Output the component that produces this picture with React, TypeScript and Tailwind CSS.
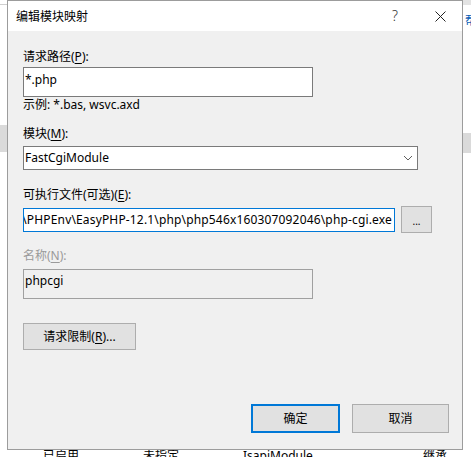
import React from "react";

const U = ({ c }: { c: string }) => <span className="underline underline-offset-2">{c}</span>;

function Btn({ children, className = "" }: { children: React.ReactNode; className?: string }) {
  return (
    <div className={"flex items-center justify-center bg-[#e1e1e1] border border-[#adadad] text-black " + className}>
      {children}
    </div>
  );
}

export default function App() {
  return (
    <div
      className="w-[471px] h-[457px] bg-white overflow-hidden flex flex-col text-[12px] leading-4 text-black"
      style={{ fontFamily: '"Noto Sans", "Noto Sans CJK SC", sans-serif' }}
    >
      <div className="flex h-[450px] shrink-0">
        {/* left background strip */}
        <div className="w-[7px] shrink-0 flex flex-col">
          <div className="h-[4px]" />
          <div className="h-px bg-[#cfcfcf]" />
          <div className="h-[120px]" />
          <div className="h-[27px] bg-[#dadada]" />
        </div>

        {/* dialog */}
        <div className="w-[456px] shrink-0 h-[450px] border border-[#9c9c9c] flex flex-col bg-[#f0f0f0]">
          <div className="h-[30px] shrink-0 bg-white flex items-center pl-[8px] pr-[16px]">
            <span className="flex-1 pt-px">编辑模块映射</span>
            <span className="text-[14px] text-[#333] mr-[37px] font-light">?</span>
            <svg width="11" height="11" viewBox="0 0 11 11" className="mt-px">
              <path d="M0.5 0.5 L10.5 10.5 M10.5 0.5 L0.5 10.5" stroke="#222" strokeWidth="1" fill="none" />
            </svg>
          </div>

          <div className="flex-1 flex flex-col pl-[15px] pr-[13px] pt-[18px] pb-[16px]">
            <div>
              请求路径(<U c="P" />):
            </div>
            <div className="mt-[2px] w-[290px] h-[30px] bg-white border border-[#7a7a7a] pl-[1px] pt-[4px]">*.php</div>
            <div className="mt-0">示例: *.bas, wsvc.axd</div>

            <div className="mt-[13px]">
              模块(<U c="M" />):
            </div>
            <div className="mt-[4px] w-[395px] h-[24px] bg-white border border-[#7a7a7a] pl-[1px] pr-[4px] flex items-center">
              <span className="flex-1">FastCgiModule</span>
              <svg width="10" height="6" viewBox="0 0 10 6">
                <path d="M1 1 L5 5 L9 1" stroke="#606060" strokeWidth="1" fill="none" />
              </svg>
            </div>

            <div className="mt-[17px]">
              可执行文件(可选)(<U c="E" />):
            </div>
            <div className="mt-[3px] flex items-center h-[27px]">
              <div className="w-[372px] h-[24px] bg-white border border-[#0078d7] flex items-center justify-end overflow-hidden pr-[2px]">
                <span className="whitespace-nowrap shrink-0 tracking-[0.16px]">D:\PHPEnv\EasyPHP-12.1\php\php546x160307092046\php-cgi.exe</span>
              </div>
              <Btn className="ml-[6px] w-[31px] h-[27px] text-[10px] text-[#555]">
                <span className="mt-[2px]">...</span>
              </Btn>
            </div>

            <div className="mt-[15px] text-[#9a9a9a]">
              名称(<U c="N" />):
            </div>
            <div className="mt-[5px] w-[290px] h-[30px] border border-[#a0a0a0] pl-[1px] pt-[3px]">phpcgi</div>

            <Btn className="mt-[24px] w-[113px] h-[27px]">
              请求限制(<U c="R" />)...
            </Btn>

            <div className="mt-auto flex justify-end gap-[12px]">
              <Btn className="w-[89px] h-[29px] !border-2 !border-[#0078d7]">确定</Btn>
              <Btn className="w-[97px] h-[29px]">取消</Btn>
            </div>
          </div>
        </div>

        {/* right background strip */}
        <div className="w-[8px] shrink-0 flex flex-col overflow-hidden">
          <div className="h-[5px] bg-[#e3e3e3]" />
          <div className="h-[10px]" />
          <div className="h-[12px] overflow-hidden text-[#0b5fb5] leading-[12px] pl-[2px] whitespace-nowrap">帮</div>
          <div className="h-[106px]" />
          <div className="h-[20px] bg-[#dadada]" />
        </div>
      </div>

      {/* bottom background strip */}
      <div className="h-[7px] flex overflow-hidden leading-[12px] whitespace-nowrap">
        <span className="ml-[43px] w-[100px]">已启用</span>
        <span className="w-[100px]">未指定</span>
        <span className="w-[180px]">IsapiModule</span>
        <span>继承</span>
      </div>
    </div>
  );
}
